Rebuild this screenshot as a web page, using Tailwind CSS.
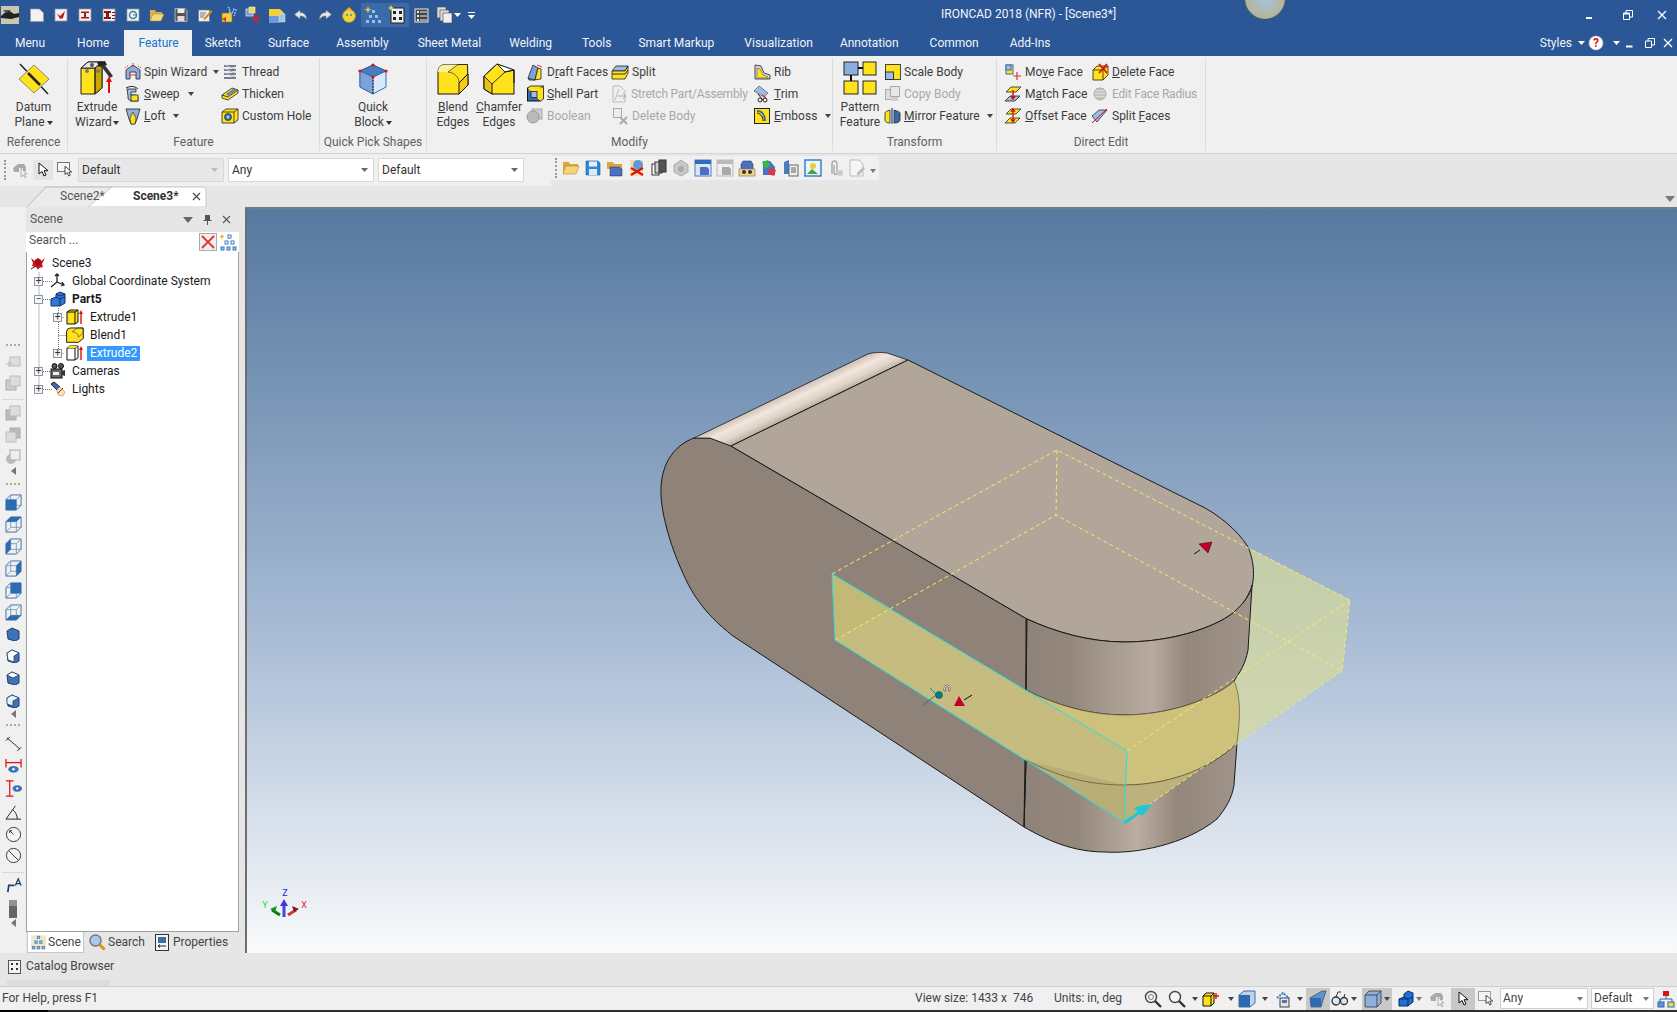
<!DOCTYPE html>
<html lang="en">
<head>
<meta charset="UTF-8">
<title>IRONCAD 2018 (NFR) - [Scene3*]</title>
<script src="https://cdn.jsdelivr.net/npm/@tailwindcss/browser@4"></script>
</head>
<body class="bg-[#e6e6e6] overflow-hidden">
<!-- shared icon parts -->
<svg class="hidden" width="0" height="0">
  <defs>
    <linearGradient id="gbl" x1="0" y1="0" x2="1" y2="1"><stop offset="0" stop-color="#e8f1fb"/><stop offset="1" stop-color="#7ea3cf"/></linearGradient>
    <linearGradient id="gband" x1="0" y1="1" x2="1" y2="0"><stop offset="0" stop-color="#5f87b8"/><stop offset="1" stop-color="#cddcec"/></linearGradient>
    <symbol id="arrow-cursor" viewBox="0 0 16 16"><path d="M4 1v11l3-2.5 2 4.5 2-1-2-4.300h4z" fill="#fff" stroke="#111" stroke-width="1"/></symbol>
    <symbol id="cubebase" viewBox="0 0 18 18"><path d="M1 6l5-5h11v11l-5 5H1z" fill="url(#gbl)" stroke="#3d6ea5"/><path d="M1 6h11v11M12 6l5-5M1 17l5-5V1M6 12h11" fill="none" stroke="#5e8cc0" stroke-width=".8"/></symbol>
    <symbol id="iso" viewBox="0 0 14 14"><path d="M1 4l5-3 7 3v8l-4 2-7-2z" fill="#3f74b4" stroke="#1d3f6c"/></symbol>
  </defs>
</svg>

<div class="w-[1677px] h-[1012px] flex flex-col overflow-hidden relative text-[12px] leading-[15px] text-[#3c3c3c] [font-family:Roboto,sans-serif]">

  <!-- title bar -->
  <div class="h-[30px] bg-[#2b5797] text-white flex items-center shrink-0 relative">
    <div class="w-[941px] flex items-center">
      <div class="w-[25px] pl-[1px]">
        <svg width="18" height="18" viewBox="0 0 18 18"><rect width="18" height="18" fill="#c8c8b0"/><path d="M0 10l7-6 6 4 5-1v4l-8 2-10-1z" fill="#222"/><path d="M2 4h8l-5 3z" fill="#555"/></svg>
      </div>
      <div class="flex items-center">
        <span class="w-[24px] flex justify-center"><svg width="16" height="16" viewBox="0 0 16 16"><path d="M1.500 2h9l4 4v8.500h-13z" fill="#f2f2f2" stroke="#999" stroke-width=".7"/></svg></span>
        <span class="w-[24px] flex justify-center"><svg width="16" height="16" viewBox="0 0 16 16"><rect x="2" y="2" width="12" height="12" fill="#f2f2f2" stroke="#999" stroke-width=".7"/><path d="M4 6l3 3 5-5-2 7-3 1z" fill="#c01818"/></svg></span>
        <span class="w-[24px] flex justify-center"><svg width="16" height="16" viewBox="0 0 16 16"><rect x="2" y="2" width="12" height="12" fill="#f2f2f2" stroke="#999" stroke-width=".7"/><path d="M4 4.500h8v1.500H9v4h3v1.500H4V10h3V6H4z" fill="#a81c1c"/></svg></span>
        <span class="w-[24px] flex justify-center"><svg width="16" height="16" viewBox="0 0 16 16"><rect x="2" y="2" width="12" height="12" fill="#f2f2f2" stroke="#999" stroke-width=".7"/><path d="M3 4h7v2H8v4h2v2H3v-2h2V6H3zM11 5h3v1h-3zM11 8h3v1h-3zM11 11h3v1h-3z" fill="#8a1414"/></svg></span>
        <span class="w-[24px] flex justify-center"><svg width="16" height="16" viewBox="0 0 16 16"><rect x="2" y="2" width="12" height="12" fill="#f2f2f2" stroke="#999" stroke-width=".7"/><circle cx="8" cy="8" r="3.500" fill="none" stroke="#2f89a6" stroke-width="1.500"/><path d="M8 8h4" stroke="#2f89a6"/></svg></span>
        <span class="w-[24px] flex justify-center"><svg width="16" height="16" viewBox="0 0 16 16"><path d="M1 3h5l1 2h6v2H4l-3 7z" fill="#d9b24a"/><path d="M4 7h11l-3 7H1z" fill="#f4d87a" stroke="#a8842a" stroke-width=".5"/></svg></span>
        <span class="w-[24px] flex justify-center"><svg width="16" height="16" viewBox="0 0 16 16"><path d="M2 1.500h10l2 2v11H2z" fill="#555" stroke="#ddd" stroke-width=".7"/><rect x="4.500" y="2" width="7" height="4" fill="#eee"/><rect x="4.500" y="9" width="7" height="5" fill="#ddd"/></svg></span>
        <span class="w-[24px] flex justify-center"><svg width="16" height="16" viewBox="0 0 16 16"><rect x="1.500" y="3" width="11" height="11.500" fill="#eee" stroke="#777" stroke-width=".7"/><path d="M3 6h6M3 8h5M3 10h4" stroke="#777"/><path d="M7 11l7-8 1.500 1.500-7 8-2 .5z" fill="#d88a1a"/></svg></span>
        <span class="w-[24px] flex justify-center"><svg width="18" height="18" viewBox="0 0 18 18"><path d="M2 7h10v9H2z" fill="#f4cf3c" stroke="#8a6a10" stroke-width=".6"/><path d="M2 13l4-2v5z" fill="#d33"/><path d="M8 1l2 2-1 3 3 1 2-4 2 1-2 6" fill="none" stroke="#9ec4ff" stroke-width="1.400" stroke-dasharray="2 1"/></svg></span>
        <span class="w-[24px] flex justify-center"><svg width="18" height="18" viewBox="0 0 18 18"><rect x="2" y="3" width="7" height="7" fill="#6d99d6" stroke="#e8f0ff" stroke-width=".7"/><rect x="5" y="1" width="6" height="6" fill="#f6d84c" stroke="#eee" stroke-width=".6"/><path d="M12 8v9M8 13h8" stroke="#d62121" stroke-width="2"/></svg></span>
        <span class="w-[24px] flex justify-center"><svg width="18" height="18" viewBox="0 0 18 18"><path d="M1 3h11l4 4v3H1z" fill="#f4cf3c"/><path d="M1 10h10v7H1z" fill="#6d99d6"/><path d="M11 8h6v8h-6z" fill="#9fc0e6" stroke="#eee" stroke-width=".5"/></svg></span>
        <span class="w-[24px] flex justify-center"><svg width="16" height="16" viewBox="0 0 16 16"><path d="M7 3L1.500 7.500 7 12V9c3 0 5 1 6.500 3.500C13.500 8 11 5.500 7 5.500z" fill="#e6e6e6" stroke="#777" stroke-width=".6"/></svg></span>
        <span class="w-[24px] flex justify-center"><svg width="16" height="16" viewBox="0 0 16 16"><path d="M9 3l5.500 4.500L9 12V9C6 9 4 10 2.500 12.500 2.500 8 5 5.500 9 5.500z" fill="#e6e6e6" stroke="#777" stroke-width=".6"/></svg></span>
        <span class="w-[24px] flex justify-center"><svg width="18" height="18" viewBox="0 0 18 18"><circle cx="9" cy="10" r="6.500" fill="#f2d23c" stroke="#a38b1c" stroke-width=".7"/><path d="M6 4l3-3 3 3z" fill="#e8b020"/><circle cx="7" cy="9" r="1" fill="#4d7cc4"/><circle cx="11" cy="9" r="1" fill="#4d7cc4"/></svg></span>
        <span class="w-[24px] h-[24px] flex items-center justify-center bg-[#3a6aa8]"><svg width="20" height="20" viewBox="0 0 20 20"><path d="M5 1l1 3 3 .500-3 1-1 3-1-3-3-1 3-.500z" fill="#f2d23c"/><rect x="9" y="5" width="3" height="3" fill="#8ec2ec"/><rect x="6" y="10" width="3" height="3" fill="#8ec2ec"/><rect x="12" y="10" width="3" height="3" fill="#8ec2ec"/><rect x="3" y="15" width="3" height="3" fill="#8ec2ec"/><rect x="9" y="15" width="3" height="3" fill="#8ec2ec"/><rect x="15" y="15" width="3" height="3" fill="#8ec2ec"/></svg></span>
        <span class="w-[24px] h-[24px] flex items-center justify-center bg-[#3a6aa8]"><svg width="20" height="20" viewBox="0 0 20 20"><rect x="4" y="3" width="13" height="15" fill="#eee" stroke="#222"/><path d="M6 6h3v3H6zM12 6h3v3h-3zM6 12h3v3H6zM12 12h3v3h-3z" fill="#222"/><path d="M4 0l1 2 2 1-2 1-1 2-1-2-2-1 2-1z" fill="#f2d23c"/></svg></span>
        <span class="w-[24px] flex justify-center"><svg width="17" height="17" viewBox="0 0 17 17"><rect x="2" y="2" width="13" height="13" fill="#444" stroke="#eee"/><path d="M4 4h2v2H4zM4 8h2v2H4zM4 12h2v2H4z" fill="#eee"/><path d="M7 5h7M7 9h7M7 13h7" stroke="#eee"/></svg></span>
        <span class="w-[24px] flex justify-center"><svg width="18" height="18" viewBox="0 0 18 18"><rect x="1" y="1" width="9" height="11" fill="#ddd" stroke="#555" stroke-width=".7"/><rect x="4" y="4" width="9" height="11" fill="#ddd" stroke="#555" stroke-width=".7"/><rect x="7" y="7" width="9" height="10" fill="#f0f0f0" stroke="#555" stroke-width=".7"/></svg></span>
        <svg class="ml-[-3px]" width="7" height="5" viewBox="0 0 7 5"><path d="M0 0h7L3.500 4z" fill="#fff"/></svg>
        <svg class="ml-[7px]" width="7" height="7" viewBox="0 0 7 7"><path d="M0 0h7v1H0zM0 3h7L3.500 7z" fill="#fff"/></svg>
      </div>
    </div>
    <span class="text-[#f0f4fa] mt-[-2px]">IRONCAD 2018 (NFR) - [Scene3*]</span>
    <div class="ml-auto flex items-center h-full">
      <span class="w-[36px] flex justify-center"><svg width="10" height="10" viewBox="0 0 10 10"><path d="M0 7h6v2H0z" fill="#fff"/></svg></span>
      <span class="w-[38px] flex justify-center"><svg width="10" height="10" viewBox="0 0 10 10"><path d="M.5 3h6v6.500h-6zM3 3V.5h6.500V7H7" fill="none" stroke="#fff"/><path d="M.5 3h6v1.500h-6z" fill="#fff"/></svg></span>
      <span class="w-[30px] flex justify-center"><svg width="10" height="10" viewBox="0 0 10 10"><path d="M1 1l8 8M9 1l-8 8" stroke="#fff" stroke-width="1.300"/></svg></span>
    </div>
    <div class="absolute left-[1245px] top-[-21px] w-[40px] h-[40px] rounded-full bg-radial from-[#a9c0e0] to-[#b9b17a] border border-[#b8ad6a]"></div>
  </div>

  <!-- ribbon tabs -->
  <div class="h-[26px] bg-[#2b5797] text-[#f0f4fa] flex items-stretch shrink-0 pl-[1px]">
    <span class="pl-[14px] pr-[16px] flex items-center">Menu</span>
    <span class="pl-[16px] pr-[15px] flex items-center">Home</span>
    <span class="pl-[14px] pr-[13px] flex items-center bg-[#f0f0f0] text-[#1874cd]">Feature</span>
    <span class="px-[13px] flex items-center">Sketch</span>
    <span class="pl-[14px] pr-[13px] flex items-center">Surface</span>
    <span class="px-[14px] flex items-center">Assembly</span>
    <span class="pl-[15px] pr-[14px] flex items-center">Sheet Metal</span>
    <span class="pl-[14px] pr-[15px] flex items-center">Welding</span>
    <span class="pl-[15px] pr-[13px] flex items-center">Tools</span>
    <span class="pl-[14px] pr-[15px] flex items-center">Smart Markup</span>
    <span class="pl-[15px] pr-[13px] flex items-center">Visualization</span>
    <span class="pl-[14px] pr-[16px] flex items-center">Annotation</span>
    <span class="pl-[15px] pr-[17px] flex items-center">Common</span>
    <span class="px-[14px] flex items-center">Add-Ins</span>
    <div class="ml-auto flex items-center pr-[4px]">
      <span>Styles</span>
      <svg class="ml-[6px]" width="7" height="5" viewBox="0 0 7 5"><path d="M0 0h7L3.500 4z" fill="#fff"/></svg>
      <svg class="ml-[3px]" width="16" height="16" viewBox="0 0 16 16"><circle cx="8" cy="8" r="7" fill="#fff" stroke="#bbb" stroke-dasharray="1 1"/><text x="8" y="12" text-anchor="middle" font-size="12" font-weight="700" fill="#e01010">?</text></svg>
      <svg class="ml-[9px]" width="7" height="5" viewBox="0 0 7 5"><path d="M0 0h7L3.500 4z" fill="#fff"/></svg>
      <svg class="ml-[5px]" width="9" height="9" viewBox="0 0 9 9"><path d="M1 6.500h6.500v2H1z" fill="#fff"/></svg>
      <svg class="ml-[11px]" width="10" height="10" viewBox="0 0 10 10"><path d="M.5 3h6v6.500h-6zM3 3V.5h6.500V7H7" fill="none" stroke="#fff"/></svg>
      <svg class="ml-[8px]" width="10" height="10" viewBox="0 0 10 10"><path d="M1 1l8 8M9 1l-8 8" stroke="#fff" stroke-width="1.300"/></svg>
    </div>
  </div>

  <!-- ribbon -->
  <div class="h-[98px] bg-[#f0f0f0] flex shrink-0 border-b border-[#d4d4d4]">

    <!-- Reference -->
    <div class="w-[68px] border-r border-[#dcdcdc] flex flex-col shrink-0 my-[2px]">
      <div class="h-[74px] flex flex-col items-center pt-[5px]">
        <svg width="34" height="32" viewBox="0 0 34 32"><path d="M3 1l28 30" stroke="#222" stroke-width="1.500"/><path d="M17 2l15 14-15 14L2 16z" fill="#ffe21c" stroke="#8a8a70"/><path d="M11 10l12 12" stroke="#222" stroke-width="2.500"/></svg>
        <span class="mt-[5px]">Datum</span>
        <span class="flex items-center gap-[2px]">Plane <svg width="6" height="4" viewBox="0 0 6 4"><path d="M0 0h6L3 4z" fill="#333"/></svg></span>
      </div>
      <span class="text-center text-[#606060] mt-[3px]">Reference</span>
    </div>

    <!-- Feature -->
    <div class="w-[252px] border-r border-[#dcdcdc] flex flex-col shrink-0 my-[2px]">
      <div class="h-[74px] flex pl-[5px] pt-[3px]">
        <div class="w-[48px] flex flex-col items-center">
          <svg width="36" height="34" viewBox="0 0 36 34"><path d="M2 7l7-6h14v26l-7 6H2z" fill="#ffe21c" stroke="#222"/><path d="M16 7l7-6v26l-7 6z" fill="#c9a900" stroke="#222"/><path d="M2 7h14v26" fill="none" stroke="#222"/><path d="M2 7l7-6h14l-7 6z" fill="#e8e8e8" stroke="#222"/><circle cx="8" cy="10" r="2" fill="#777"/><circle cx="13" cy="4" r="2" fill="#555"/><circle cx="19" cy="10" r="2" fill="#777"/><path d="M18 1l8-1 2 4-8 2z" fill="#222"/><path d="M22 5l3-2 9 12-3 2z" fill="#333"/><path d="M30 17v15" stroke="#e01010" stroke-width="2"/><path d="M27 21l3-6 3 6z" fill="#e01010"/></svg>
          <span class="mt-[5px]">Extrude</span>
          <span class="flex items-center gap-[1px]">Wizard<svg width="6" height="4" viewBox="0 0 6 4"><path d="M0 0h6L3 4z" fill="#333"/></svg></span>
        </div>
        <div class="ml-[3px] w-[97px] flex flex-col">
          <div class="flex items-center h-[22px] gap-[2px]"><svg width="18" height="18" viewBox="0 0 18 18"><path d="M2 16V7l7-5 7 5v9h-4V9H6v7z" fill="#8fb0dd" stroke="#222" stroke-width=".8"/><path d="M1 5l4-3M17 5l-4-3M9 0v4" stroke="#d33" stroke-dasharray="1.500 1"/><path d="M6 12h6" stroke="#d33"/></svg><span>Spin Wizard</span><svg class="ml-[4px]" width="6" height="4" viewBox="0 0 6 4"><path d="M0 0h6L3 4z" fill="#444"/></svg></div>
          <div class="flex items-center h-[22px] gap-[2px]"><svg width="18" height="18" viewBox="0 0 18 18"><path d="M3 4h9v3H7v3h4l3 2v4H7l-3-2v-3z" fill="#9dbbe4" stroke="#222" stroke-width=".8"/><rect x="7" y="10" width="7" height="6" fill="#ffe21c" stroke="#222" stroke-width=".8"/><path d="M2 3c6-3 10-1 12 1" fill="none" stroke="#222"/></svg><span><u>S</u>weep</span><svg class="ml-[6px]" width="6" height="4" viewBox="0 0 6 4"><path d="M0 0h6L3 4z" fill="#444"/></svg></div>
          <div class="flex items-center h-[22px] gap-[2px]"><svg width="18" height="18" viewBox="0 0 18 18"><path d="M2 2h14l-3 10-2 5H7L5 12z" fill="#8fb0dd" stroke="#222" stroke-width=".8"/><path d="M6 11l3-6 3 6-1 6H7z" fill="#ffe21c" stroke="#222" stroke-width=".6"/></svg><span><u>L</u>oft</span><svg class="ml-[6px]" width="6" height="4" viewBox="0 0 6 4"><path d="M0 0h6L3 4z" fill="#444"/></svg></div>
        </div>
        <div class="flex flex-col">
          <div class="flex items-center h-[22px] gap-[3px]"><svg width="18" height="18" viewBox="0 0 18 18"><path d="M3 3h12M3 7h12M3 11h12M3 15h12" stroke="#555" stroke-width="1.500"/><path d="M4 2l10 4M4 6l10 4M4 10l10 4" stroke="#9dbbe4"/></svg><span>Thread</span></div>
          <div class="flex items-center h-[22px] gap-[3px]"><svg width="18" height="18" viewBox="0 0 18 18"><path d="M1 10l10-7 6 2v3L7 15l-6-2z" fill="#ffe21c" stroke="#222" stroke-width=".8"/><path d="M1 10l6 2 10-7" fill="none" stroke="#222" stroke-width=".8"/><path d="M5 9l7-5 4 1-9 6z" fill="#5d87b8"/></svg><span>Thicken</span></div>
          <div class="flex items-center h-[22px] gap-[3px]"><svg width="18" height="18" viewBox="0 0 18 18"><path d="M1 5l4-3h12v11l-4 3H1z" fill="#ffe21c" stroke="#222" stroke-width=".8"/><path d="M13 5v11M1 5h12l4-3" fill="none" stroke="#222" stroke-width=".8"/><circle cx="7" cy="10" r="3.500" fill="#3b6cb4" stroke="#222" stroke-width=".7"/><circle cx="7" cy="10" r="1.500" fill="#bcd"/></svg><span>Custom Hole</span></div>
        </div>
      </div>
      <span class="text-center text-[#606060] mt-[3px]">Feature</span>
    </div>

    <!-- Quick Pick Shapes -->
    <div class="w-[107px] border-r border-[#dcdcdc] flex flex-col shrink-0 my-[2px]">
      <div class="h-[74px] flex flex-col items-center pt-[5px]">
        <svg width="32" height="34" viewBox="0 0 32 34"><path d="M16 2l13 6v16l-13 7-13-7V8z" fill="#dbe8f8" stroke="#3a6bab"/><path d="M16 2l13 6-13 6L3 8z" fill="#4a7cc2" stroke="#2d5a96"/><path d="M3 8l13 6v17L3 24z" fill="#7ba3d8" stroke="#3a6bab"/><path d="M16 14v17" stroke="#111" stroke-dasharray="1.500 1.500"/><circle cx="16" cy="2" r="1.600" fill="#e01010"/><circle cx="3" cy="8" r="1.600" fill="#e01010"/><circle cx="29" cy="8" r="1.600" fill="#e01010"/><circle cx="16" cy="14" r="1.600" fill="#e01010"/></svg>
        <span class="mt-[3px]">Quick</span>
        <span class="flex items-center gap-[2px]">Block<svg width="6" height="4" viewBox="0 0 6 4"><path d="M0 0h6L3 4z" fill="#333"/></svg></span>
      </div>
      <span class="text-center text-[#606060] mt-[3px]">Quick Pick Shapes</span>
    </div>

    <!-- Modify -->
    <div class="w-[406px] border-r border-[#dcdcdc] flex flex-col shrink-0 my-[2px]">
      <div class="h-[74px] flex pl-[3px] pt-[5px]">
        <div class="w-[46px] flex flex-col items-center">
          <svg width="32" height="32" viewBox="0 0 32 32"><path d="M1 31V9Q1 2 8 1.500H30.500L31 22 22 31z" fill="#ffe21c" stroke="#111"/><path d="M1 9Q1 2 8 1.500H21L11 9z" fill="#f8f0a0"/><path d="M11 9L21 1.500H30.500V11L22 20C22 14 18 10 11 9z" fill="url(#gband)" stroke="#333" stroke-width=".7"/><path d="M22 31V20L31 11V22z" fill="#f2cd14" stroke="#111"/></svg>
          <span class="mt-[5px]"><u>B</u>lend</span>
          <span>Edges</span>
        </div>
        <div class="w-[46px] flex flex-col items-center">
          <svg width="32" height="32" viewBox="0 0 32 32"><path d="M1 13L14 1l17 6v24H9L1 26z" fill="#ffe21c" stroke="#111"/><path d="M1 13v13l8 5V21z" fill="#e8c410" stroke="#111"/><path d="M1 13L14 1l8 8L9 21z" fill="url(#gband)" stroke="#333"/><path d="M14 1l17 6-9 2z" fill="#fff" stroke="#111" stroke-width=".8"/><path d="M22 9l9-2v13" fill="none" stroke="#111"/></svg>
          <span class="mt-[5px]"><u>C</u>hamfer</span>
          <span>Edges</span>
        </div>
        <div class="ml-[4px] w-[85px] flex flex-col mt-[-2px]">
          <div class="flex items-center h-[22px] gap-[3px]"><svg width="18" height="18" viewBox="0 0 18 18"><path d="M2 15l5-13 5 3-3 12H3z" fill="#7ba3d8" stroke="#222" stroke-width=".8"/><path d="M2 15l6 2 7-1V6l-3-1-3 12" fill="#ffe21c" stroke="#222" stroke-width=".8"/><path d="M11 2l5 2" stroke="#d33"/></svg><span>D<u>r</u>aft Faces</span></div>
          <div class="flex items-center h-[22px] gap-[3px]"><svg width="18" height="18" viewBox="0 0 18 18"><rect x="1.500" y="3" width="13" height="13" fill="#3a6bab" stroke="#111"/><path d="M1.500 3l3-2h13v13l-3 2M14.500 3l3-2" fill="#ffe21c" stroke="#111" stroke-width=".8"/><rect x="5" y="6.500" width="6" height="6" fill="#9dbbe4" stroke="#111" stroke-width=".7"/></svg><span><u>S</u>hell Part</span></div>
          <div class="flex items-center h-[22px] gap-[3px] text-[#a8a8a8]"><svg width="18" height="18" viewBox="0 0 18 18"><rect x="6" y="2" width="10" height="10" fill="#ccc" stroke="#aaa"/><circle cx="7" cy="10" r="6" fill="#bbb" stroke="#999"/></svg><span>Boolean</span></div>
        </div>
        <div class="w-[142px] flex flex-col mt-[-2px]">
          <div class="flex items-center h-[22px] gap-[3px]"><svg width="18" height="18" viewBox="0 0 18 18"><path d="M1 8l4-5h12l-3 5H1z" fill="#9dbbe4" stroke="#222" stroke-width=".8"/><path d="M1 8h13l3-5v7l-3 6H1z" fill="#ffe21c" stroke="#222" stroke-width=".8"/><path d="M1 11h13l3-4" fill="none" stroke="#333"/></svg><span>Split</span></div>
          <div class="flex items-center h-[22px] gap-[2px] text-[#a8a8a8]"><svg width="18" height="18" viewBox="0 0 18 18"><path d="M2 1h7l5 5v11H2z" fill="#eee" stroke="#bbb"/><path d="M7 11h8M12 8l3 3-3 3" fill="none" stroke="#aaa"/><path d="M4 15L8 4" stroke="#bbb"/></svg><span class="tracking-[-0.2px]">Stretch Part/Assembly</span></div>
          <div class="flex items-center h-[22px] gap-[3px] text-[#a8a8a8]"><svg width="18" height="18" viewBox="0 0 18 18"><rect x="2.500" y="1.500" width="8" height="9" fill="#eee" stroke="#aaa"/><path d="M9 10l7 7M16 10l-7 7" stroke="#aaa" stroke-width="2"/></svg><span>Delete Body</span></div>
        </div>
        <div class="flex flex-col mt-[-2px]">
          <div class="flex items-center h-[22px] gap-[3px]"><svg width="18" height="18" viewBox="0 0 18 18"><path d="M2 16V2l6 1 3 7 6 2v4z" fill="#d8d8d8" stroke="#222" stroke-width=".8"/><path d="M4 15V5l3 1 3 6 5 2v1z" fill="#ffe21c" stroke="#555" stroke-width=".6"/></svg><span>Rib</span></div>
          <div class="flex items-center h-[22px] gap-[3px]"><svg width="18" height="18" viewBox="0 0 18 18"><path d="M1 6l5-5 9 7-4 4z" fill="#9dbbe4" stroke="#555" stroke-width=".7"/><path d="M9 10l4 3" stroke="#d33" stroke-width="1.500"/><circle cx="7" cy="15" r="2" fill="none" stroke="#222"/><circle cx="12" cy="15" r="2" fill="none" stroke="#222"/><path d="M5 9l5 6" stroke="#222"/></svg><span><u>T</u>rim</span></div>
          <div class="flex items-center h-[22px] gap-[3px]"><svg width="18" height="18" viewBox="0 0 18 18"><rect x="1.500" y="1.500" width="15" height="15" fill="#ffe21c" stroke="#222"/><path d="M4 4c5 0 8 4 8 10" fill="none" stroke="#3a6bab" stroke-width="2"/><path d="M4 6c4 1 6 4 6 8" fill="none" stroke="#111"/></svg><span><u>E</u>mboss</span><svg class="ml-[5px]" width="6" height="4" viewBox="0 0 6 4"><path d="M0 0h6L3 4z" fill="#444"/></svg></div>
        </div>
      </div>
      <span class="text-center text-[#606060] mt-[3px]">Modify</span>
    </div>

    <!-- Transform -->
    <div class="w-[164px] border-r border-[#dcdcdc] flex flex-col shrink-0 my-[2px]">
      <div class="h-[74px] flex pl-[3px] pt-[3px]">
        <div class="w-[48px] flex flex-col items-center">
          <svg width="34" height="34" viewBox="0 0 34 34"><rect x="1" y="1" width="14" height="13" fill="#8caedf" stroke="#222"/><rect x="20" y="1" width="13" height="13" fill="#ffe21c" stroke="#222"/><rect x="1" y="20" width="14" height="13" fill="#ffe21c" stroke="#222"/><rect x="20" y="20" width="13" height="13" fill="#ffe21c" stroke="#222"/><path d="M8 14v6M15 7h5" stroke="#111" stroke-width="2"/></svg>
          <span class="mt-[5px]">Pattern</span>
          <span>Feature</span>
        </div>
        <div class="flex flex-col">
          <div class="flex items-center h-[22px] gap-[2px]"><svg width="18" height="18" viewBox="0 0 18 18"><rect x="1.500" y="1.500" width="15" height="15" fill="#ffe21c" stroke="#444"/><rect x="1.500" y="9" width="8" height="7.500" fill="#9dbbe4" stroke="#333"/></svg><span>Scale Body</span></div>
          <div class="flex items-center h-[22px] gap-[2px] text-[#a8a8a8]"><svg width="18" height="18" viewBox="0 0 18 18"><rect x="1.500" y="4.500" width="9" height="10" fill="#ddd" stroke="#aaa"/><rect x="6.500" y="1.500" width="9" height="10" fill="#e8e8e8" stroke="#aaa"/><rect x="8" y="12" width="6" height="4" fill="#ccc"/></svg><span>Copy Body</span></div>
          <div class="flex items-center h-[22px] gap-[2px]"><svg width="18" height="18" viewBox="0 0 18 18"><path d="M8 1v16" stroke="#3a6bab" stroke-width="1.500"/><path d="M6 3c-3 1-5 2-5 3v7c0 2 2 3 5 3z" fill="#ffe21c" stroke="#222" stroke-width=".8"/><path d="M10 3c3 1 6 2 6 3v7c0 2-3 3-6 3z" fill="#3a6bab" stroke="#222" stroke-width=".8"/></svg><span><u>M</u>irror Feature</span><svg class="ml-[5px]" width="6" height="4" viewBox="0 0 6 4"><path d="M0 0h6L3 4z" fill="#444"/></svg></div>
        </div>
      </div>
      <span class="text-center text-[#606060] mt-[3px]">Transform</span>
    </div>

    <!-- Direct Edit -->
    <div class="w-[209px] border-r border-[#dcdcdc] flex flex-col shrink-0 my-[2px]">
      <div class="h-[74px] flex pl-[7px] pt-[3px]">
        <div class="w-[87px] flex flex-col">
          <div class="flex items-center h-[22px] gap-[3px]"><svg width="18" height="18" viewBox="0 0 18 18"><rect x="2" y="2" width="7" height="9" fill="#ffe21c" stroke="#3a6bab"/><rect x="2" y="2" width="5" height="5" fill="#9dbbe4" stroke="#3a6bab"/><path d="M13 9v8M9 13h8" stroke="#d33" stroke-width="1.200"/></svg><span>Mo<u>v</u>e Face</span></div>
          <div class="flex items-center h-[22px] gap-[3px]"><svg width="18" height="18" viewBox="0 0 18 18"><path d="M2 7l5-5h10l-5 5z" fill="#ffe21c" stroke="#222" stroke-width=".8"/><path d="M1 16l5-5h10l-5 5z" fill="#9dbbe4" stroke="#222" stroke-width=".8"/><path d="M9 5v8M7 11l2 3 2-3" fill="none" stroke="#d01010" stroke-width="1.400"/></svg><span>M<u>a</u>tch Face</span></div>
          <div class="flex items-center h-[22px] gap-[3px]"><svg width="18" height="18" viewBox="0 0 18 18"><path d="M2 7l5-5h10l-5 5z" fill="#ffe21c" stroke="#222" stroke-width=".8"/><path d="M1 16l5-5h10l-5 5z" fill="#ffe21c" stroke="#222" stroke-width=".8"/><path d="M9 3v11M7 5l2-3 2 3M7 12l2 3 2-3" fill="none" stroke="#d01010" stroke-width="1.300"/></svg><span><u>O</u>ffset Face</span></div>
        </div>
        <div class="flex flex-col">
          <div class="flex items-center h-[22px] gap-[3px]"><svg width="18" height="18" viewBox="0 0 18 18"><path d="M2 7l4-4h11v9l-5 5H2z" fill="#ffe21c" stroke="#222" stroke-width=".8"/><path d="M2 7h10v10M12 7l5-4" fill="none" stroke="#222" stroke-width=".8"/><path d="M8 1l8 9M16 1L8 10" stroke="#e01010" stroke-width="1.800"/></svg><span><u>D</u>elete Face</span></div>
          <div class="flex items-center h-[22px] gap-[3px] text-[#a8a8a8]"><svg width="18" height="18" viewBox="0 0 18 18"><circle cx="9" cy="9" r="6" fill="#ddd" stroke="#aaa"/><path d="M5 4h8M4 7h10M4 10h10M5 13h8" stroke="#aaa"/></svg><span class="tracking-[-0.2px]">Edit Face Radius</span></div>
          <div class="flex items-center h-[22px] gap-[3px]"><svg width="18" height="18" viewBox="0 0 18 18"><path d="M1 9l7-6h8l-5 6-5 6z" fill="#9dbbe4" stroke="#333" stroke-width=".8"/><path d="M1 16L16 2" stroke="#d01010"/></svg><span>Split <u>F</u>aces</span></div>
        </div>
      </div>
      <span class="text-center text-[#606060] mt-[3px]">Direct Edit</span>
    </div>
  </div>

  <!-- toolbar row -->
  <div class="h-[32px] bg-[#e6e6e6] flex items-start shrink-0">
    <div class="w-[551px] h-full bg-[#f0f0f0] flex items-start pt-[4px] pl-[4px]">
      <span class="w-[2px] h-[20px] mt-[2px] border-l-2 border-dotted border-[#999]"></span>
      <span class="ml-[5px] w-[20px] mt-[3px] flex justify-center"><svg width="18" height="18" viewBox="0 0 18 18"><path d="M1 7l5-4h6l2 3v4h-3v-3l-4 0v4H2z" fill="#aaa"/><path d="M9 7v9l2-2 2 3 1-1-2-3h3z" fill="#eee" stroke="#999" stroke-width=".7"/></svg></span>
      <span class="ml-[2px] w-[20px] h-[20px] mt-[2px] bg-[#e4e4e4] flex items-center justify-center"><svg width="16" height="16"><use href="#arrow-cursor"/></svg></span>
      <span class="ml-[2px] w-[20px] mt-[3px] flex justify-center"><svg width="18" height="18" viewBox="0 0 18 18"><rect x="1.500" y="1.500" width="12" height="9" fill="#f4f4f4" stroke="#777"/><use href="#arrow-cursor" x="6" y="4" width="12" height="13"/></svg></span>
      <div class="ml-[3px] w-[146px] h-[24px] bg-[#e8e8e8] border border-[#d8d8d8] flex items-center px-[3px] text-[#333]">Default<svg class="ml-auto mr-[2px]" width="7" height="4" viewBox="0 0 7 4"><path d="M0 0h7L3.500 4z" fill="#bbb"/></svg></div>
      <div class="ml-[4px] w-[146px] h-[24px] bg-white border border-[#d8d8d8] flex items-center px-[3px] text-[#333]">Any<svg class="ml-auto mr-[2px]" width="7" height="4" viewBox="0 0 7 4"><path d="M0 0h7L3.500 4z" fill="#666"/></svg></div>
      <div class="ml-[4px] w-[146px] h-[24px] bg-white border border-[#d8d8d8] flex items-center px-[3px] text-[#333]">Default<svg class="ml-auto mr-[2px]" width="7" height="4" viewBox="0 0 7 4"><path d="M0 0h7L3.500 4z" fill="#666"/></svg></div>
    </div>
    <div class="w-[328px] h-[24px] mt-[2px] bg-[#f0f0f0] flex items-center pl-[4px]">
      <span class="w-[2px] h-[20px] border-l-2 border-dotted border-[#999]"></span>
      <div class="flex items-center ml-[5px] gap-[4px]">
        <svg width="18" height="18" viewBox="0 0 18 18"><path d="M1 3h6l1 2h8v2H4L1 15z" fill="#d9a640"/><path d="M4 7h13l-3 8H1z" fill="#f4d478" stroke="#b58a2a" stroke-width=".6"/></svg>
        <svg width="18" height="18" viewBox="0 0 18 18"><path d="M2 2h12l2 2v12H2z" fill="#2f8ad8" stroke="#1a5c9c" stroke-width=".6"/><rect x="5" y="2.500" width="8" height="5" fill="#eef"/><rect x="5" y="10" width="8" height="6" fill="#dfe9f5"/></svg>
        <svg width="18" height="18" viewBox="0 0 18 18"><path d="M1 3h6l1 2h8v5H1z" fill="#d9a640"/><path d="M4 8h9l3 2v7H4z" fill="#4a6fc4" stroke="#234" stroke-width=".5"/></svg>
        <svg width="18" height="18" viewBox="0 0 18 18"><rect x="2" y="1" width="13" height="16" fill="#f6ddb0"/><circle cx="10" cy="6" r="5" fill="#5d9ad8"/><path d="M3 9l12 7M15 9L3 16" stroke="#e01010" stroke-width="2.200"/></svg>
        <svg width="18" height="18" viewBox="0 0 18 18"><rect x="2" y="5" width="7" height="11" fill="#fff" stroke="#333"/><rect x="5" y="3" width="7" height="11" fill="#ccc" stroke="#333"/><rect x="9" y="1" width="7" height="12" fill="#555" stroke="#333"/></svg>
        <svg width="18" height="18" viewBox="0 0 18 18"><path d="M9 1l7 5v7l-7 4-7-4V6z" fill="#c8c8c8" stroke="#aaa"/><circle cx="9" cy="10" r="3" fill="#aaa"/></svg>
        <svg width="18" height="18" viewBox="0 0 18 18"><rect x="1" y="1" width="16" height="16" fill="#dbe7f5" stroke="#4a7cc2"/><rect x="1" y="1" width="16" height="4" fill="#2f6cc0"/><path d="M6 8h7l2 2v6H6z" fill="#4a6fc4"/></svg>
        <svg width="18" height="18" viewBox="0 0 18 18"><rect x="1" y="1" width="16" height="16" fill="#eee" stroke="#bbb"/><rect x="1" y="1" width="16" height="4" fill="#bbb"/><path d="M6 8h7l2 2v6H6z" fill="#aaa"/></svg>
        <svg width="18" height="18" viewBox="0 0 18 18"><path d="M5 2h8l2 3v6H3V5z" fill="#4a6fc4" stroke="#234" stroke-width=".5"/><rect x="1" y="10" width="16" height="7" fill="#efd68c" stroke="#865" stroke-width=".6"/><circle cx="6" cy="13" r="2" fill="#333"/><circle cx="12" cy="13" r="2" fill="#333"/></svg>
        <svg width="18" height="18" viewBox="0 0 18 18"><path d="M3 2h7l5 6v8H3z" fill="#4a6fc4"/><path d="M2 3l6-2 2 6-5 3z" fill="#3cb44a"/><path d="M10 9l6 2-2 6-6-2z" fill="#e03a3a"/></svg>
        <svg width="18" height="18" viewBox="0 0 18 18"><path d="M2 3l5-2v14H2z" fill="#4a7cc2"/><rect x="7" y="6" width="9" height="11" fill="#eee" stroke="#666"/><path d="M9 9h5M9 11h5M9 13h5" stroke="#666"/></svg>
        <svg width="18" height="18" viewBox="0 0 18 18"><rect x="1" y="1" width="16" height="16" fill="#eaf4ff" stroke="#2f7ac4" stroke-width="1.400"/><circle cx="9" cy="7" r="3" fill="#e8cf3c"/><path d="M3 15l5-5 6 5z" fill="#4ba03c"/></svg>
        <svg width="18" height="18" viewBox="0 0 18 18"><path d="M6 15V5c0-4 5-4 5 0v9c0 2-3 2-3 0V6" fill="none" stroke="#aaa" stroke-width="1.400"/><circle cx="14" cy="14" r="3" fill="#ccc"/></svg>
        <svg width="18" height="18" viewBox="0 0 18 18"><path d="M2 1h9l4 4v12H2z" fill="#f6f6f6" stroke="#bbb"/><path d="M9 14l6-6 2 2-6 6h-2z" fill="#bbb"/></svg>
        <svg class="mt-[6px]" width="6" height="4" viewBox="0 0 6 4"><path d="M0 0h6L3 4z" fill="#777"/></svg>
      </div>
    </div>
  </div>

  <!-- document tabs -->
  <div class="h-[21px] flex items-end shrink-0 relative">
    <div class="relative w-[210px] h-[21px] ml-[26px]">
      <svg class="absolute left-0 top-0" width="190" height="21" viewBox="0 0 190 21"><path d="M1 21L20 1h68l-18 20" fill="#ebebeb" stroke="#b8b8b8"/><path d="M62 21L86 1h91c2 0 3 1 3 3v17z" fill="#fff" stroke="#c8c8c8"/></svg>
      <div class="relative flex items-center h-full">
        <span class="ml-[34px] w-[66px] text-[#555]">Scene2*</span>
        <span class="ml-[7px] font-bold text-[#333] w-[59px]">Scene3*</span>
        <svg width="9" height="9" viewBox="0 0 9 9"><path d="M1 1l7 7M8 1L1 8" stroke="#444" stroke-width="1.100"/></svg>
      </div>
    </div>
    <svg class="ml-auto mr-[2px] mb-[5px]" width="10" height="6" viewBox="0 0 10 6"><path d="M0 0h10L5 6z" fill="#777"/></svg>
  </div>

  <!-- main -->
  <div class="h-[746px] flex shrink-0">
    <!-- left vertical toolbar -->
    <div class="w-[26px] bg-[#f0f0f0] shrink-0 flex flex-col items-center pt-[137px]">
      <span class="w-[14px] border-t-2 border-dotted border-[#aaa]"></span>
      <svg class="mt-[8px]" width="16" height="16" viewBox="0 0 16 16"><rect x="5" y="3" width="10" height="9" fill="#ddd" stroke="#bbb"/><path d="M1 10h6M4 7v6" stroke="#bbb"/></svg>
      <svg class="mt-[5px]" width="16" height="16" viewBox="0 0 16 16"><rect x="1" y="5" width="10" height="10" fill="#ccc" stroke="#aaa"/><rect x="5" y="1" width="10" height="10" fill="#ddd" stroke="#bbb"/></svg>
      <span class="w-[22px] border-t border-[#d8d8d8] mt-[8px]"></span>
      <svg class="mt-[5px]" width="16" height="16" viewBox="0 0 16 16"><rect x="1" y="5" width="10" height="10" fill="#bbb" stroke="#aaa"/><rect x="5" y="1" width="10" height="10" fill="#ddd" stroke="#bbb"/></svg>
      <svg class="mt-[6px]" width="16" height="16" viewBox="0 0 16 16"><rect x="5" y="1" width="10" height="10" fill="#bbb" stroke="#aaa"/><rect x="1" y="5" width="10" height="10" fill="#ddd" stroke="#bbb"/></svg>
      <svg class="mt-[6px]" width="16" height="16" viewBox="0 0 16 16"><circle cx="6" cy="10" r="5" fill="#bbb"/><rect x="5" y="1" width="10" height="10" fill="#eee" stroke="#aaa"/></svg>
      <svg class="mt-[2px]" width="5" height="8" viewBox="0 0 5 8"><path d="M5 0v8L0 4z" fill="#777"/></svg>
      <span class="w-[14px] border-t-2 border-dotted border-[#aaa] mt-[8px]"></span>
      <svg class="mt-[9px]" width="17" height="17" viewBox="0 0 18 18"><use href="#cubebase" width="18" height="18"/><rect x="1" y="6" width="11" height="11" fill="#2d6ab0"/></svg>
      <svg class="mt-[5px]" width="17" height="17" viewBox="0 0 18 18"><use href="#cubebase" width="18" height="18"/><path d="M1 6l5-5h11l-5 5z" fill="#2d6ab0"/></svg>
      <svg class="mt-[5px]" width="17" height="17" viewBox="0 0 18 18"><use href="#cubebase" width="18" height="18"/><path d="M1 6l5-5v11l-5 5z" fill="#2d6ab0"/></svg>
      <svg class="mt-[5px]" width="17" height="17" viewBox="0 0 18 18"><use href="#cubebase" width="18" height="18"/><path d="M12 6l5-5v11l-5 5z" fill="#2d6ab0"/></svg>
      <svg class="mt-[5px]" width="17" height="17" viewBox="0 0 18 18"><use href="#cubebase" width="18" height="18"/><rect x="6" y="1" width="11" height="11" fill="#2d6ab0"/></svg>
      <svg class="mt-[5px]" width="17" height="17" viewBox="0 0 18 18"><use href="#cubebase" width="18" height="18"/><path d="M1 17l5-5h11l-5 5z" fill="#2d6ab0"/></svg>
      <svg class="mt-[6px]" width="14" height="14" viewBox="0 0 14 14"><use href="#iso" width="14" height="14"/></svg>
      <svg class="mt-[8px]" width="14" height="14" viewBox="0 0 14 14"><use href="#iso" width="14" height="14"/><path d="M1 4l5-3 7 3-5 3v6l-6-2z" fill="#fff" stroke="#1d3f6c" stroke-width=".8"/></svg>
      <svg class="mt-[8px]" width="14" height="14" viewBox="0 0 14 14"><use href="#iso" width="14" height="14"/><path d="M1 4l5-3 7 3-6 3z" fill="#fff" stroke="#1d3f6c" stroke-width=".8"/></svg>
      <svg class="mt-[9px]" width="14" height="14" viewBox="0 0 14 14"><use href="#iso" width="14" height="14"/><path d="M1 4l5-3 7 3-6 3v5l-6-2z" fill="#e8f0fa" stroke="#1d3f6c" stroke-width=".8"/></svg>
      <svg class="mt-[2px]" width="5" height="8" viewBox="0 0 5 8"><path d="M5 0v8L0 4z" fill="#777"/></svg>
      <span class="w-[14px] border-t-2 border-dotted border-[#aaa] mt-[6px]"></span>
      <svg class="mt-[9px]" width="17" height="17" viewBox="0 0 18 18"><path d="M2 3l14 12M1 6l4-4M13 17l4-4" stroke="#222"/></svg>
      <svg class="mt-[6px]" width="17" height="17" viewBox="0 0 18 18"><path d="M1 1v9M17 1v9M1 5h16" stroke="#e01010" stroke-width="1.300"/><ellipse cx="9" cy="12" rx="5" ry="3" fill="#2f7ad4" stroke="#222" stroke-width=".5"/><circle cx="9" cy="12" r="1.300" fill="#fff"/></svg>
      <svg class="mt-[5px]" width="17" height="17" viewBox="0 0 18 18"><path d="M1 1h8M1 17h8M5 1v16" stroke="#e01010" stroke-width="1.300"/><ellipse cx="13" cy="9" rx="4.500" ry="3" fill="#2f7ad4" stroke="#222" stroke-width=".5"/><circle cx="13" cy="9" r="1.200" fill="#fff"/></svg>
      <svg class="mt-[7px]" width="17" height="17" viewBox="0 0 18 18"><path d="M1 16h16M1 16L11 2" stroke="#222" fill="none"/><path d="M8 6c3 2 5 6 5 10" fill="none" stroke="#222"/></svg>
      <svg class="mt-[5px]" width="17" height="17" viewBox="0 0 18 18"><circle cx="9" cy="9" r="7.500" fill="#f4f4f4" stroke="#333"/><path d="M9 9L5 5M5 5h2.500M5 5v2.500" stroke="#333" fill="none"/></svg>
      <svg class="mt-[4px]" width="17" height="17" viewBox="0 0 18 18"><circle cx="9" cy="9" r="7.500" fill="#f4f4f4" stroke="#333"/><path d="M4 4l10 10" stroke="#333"/></svg>
      <span class="w-[22px] border-t border-[#d8d8d8] mt-[8px]"></span>
      <svg class="mt-[3px]" width="17" height="17" viewBox="0 0 18 18"><path d="M3 17l1-7h6" fill="none" stroke="#1d3f6c" stroke-width="1.800"/><path d="M11 10l3-7 3 7M12 8h4" fill="none" stroke="#1d3f6c" stroke-width="1.400"/></svg>
      <svg class="mt-[7px]" width="10" height="18" viewBox="0 0 10 18"><path d="M1 1h8M1 3h8M1 5h8" stroke="#333"/><rect x="1" y="6" width="8" height="12" fill="#666"/></svg>
      <svg class="mt-[1px]" width="5" height="8" viewBox="0 0 5 8"><path d="M5 0v8L0 4z" fill="#777"/></svg>
    </div>

    <!-- scene panel -->
    <div class="w-[219px] shrink-0 flex flex-col pr-[6px] bg-[#e6e6e6]">
      <div class="h-[25px] flex items-center pl-[4px] text-[#555]">
        <span>Scene</span>
        <svg class="ml-auto" width="10" height="6" viewBox="0 0 10 6"><path d="M0 0h10L5 6z" fill="#666"/></svg>
        <svg class="ml-[10px]" width="9" height="11" viewBox="0 0 9 11"><path d="M2 1h5v5h1.500v1H5v4H4V7H.5V6H2z" fill="#555"/></svg>
        <svg class="ml-[10px] mr-[8px]" width="9" height="9" viewBox="0 0 9 9"><path d="M1 1l7 7M8 1L1 8" stroke="#555" stroke-width="1.100"/></svg>
      </div>
      <div class="h-[20px] bg-white flex items-center pl-[3px] pr-[2px] text-[#555]">
        <span class="mt-[-3px]">Search ...</span>
        <span class="ml-auto w-[18px] h-[18px] bg-[#eee] border border-[#aaa] flex items-center justify-center"><svg width="14" height="14" viewBox="0 0 14 14"><path d="M1 1l12 12M13 1L1 13" stroke="#e0362c" stroke-width="1.800"/></svg></span>
        <svg class="ml-[1px]" width="19" height="18" viewBox="0 0 19 18"><path d="M4 1l1 2 2 .500-2 .500-1 2-1-2-2-.500 2-.500z" fill="#f0a810"/><rect x="10" y="2" width="3" height="3" fill="none" stroke="#3b7cc4"/><rect x="7" y="8" width="3" height="3" fill="none" stroke="#3b7cc4"/><rect x="13" y="8" width="3" height="3" fill="none" stroke="#3b7cc4"/><rect x="3" y="14" width="3" height="3" fill="#9ac2ea" stroke="#3b7cc4"/><rect x="9" y="14" width="3" height="3" fill="#9ac2ea" stroke="#3b7cc4"/><rect x="15" y="14" width="3" height="3" fill="#9ac2ea" stroke="#3b7cc4"/></svg>
      </div>
      <div class="flex-1 bg-white border-x border-b border-[#a0a0a0] pt-[2px] relative text-[#1a1a1a]">
        <svg class="absolute left-0 top-0" width="70" height="145"><path d="M12 20.500v116M12 29.500h14M12 47.500h14M12 119.500h14M12 137.500h14M31.500 56v46M31.500 65.500h5M31.500 83.500h12M31.500 101.500h5" stroke="#777" stroke-dasharray="1 1" fill="none"/></svg>
        <div class="relative flex items-center h-[18px] pl-[3px] gap-[6px]">
          <svg width="16" height="16" viewBox="0 0 16 16"><path d="M1 3l5 4h4l5-4-3 6 1 3-4 1-1 2-2-3-4-1 1-3z" fill="#d4161c"/><path d="M5 5l3-2 3 2v4l-3 2-3-2z" fill="#a01014"/><path d="M1 14l5-3" stroke="#222"/></svg>
          <span>Scene3</span>
        </div>
        <div class="relative flex items-center h-[18px] pl-[7px]">
          <span class="w-[9px] h-[9px] border border-[#8a97a8] bg-[#f4f4f4] flex items-center justify-center text-[#333] text-[10px] leading-none">+</span>
          <svg class="ml-[7px]" width="16" height="16" viewBox="0 0 16 16"><path d="M7 9V1M5 3l2-2 2 2M7 9l7 3M12 9l2 3-3 1M7 9l-6 5" fill="none" stroke="#222" stroke-width="1.300"/></svg>
          <span class="ml-[6px]">Global Coordinate System</span>
        </div>
        <div class="relative flex items-center h-[18px] pl-[7px]">
          <span class="w-[9px] h-[9px] border border-[#8a97a8] bg-[#f4f4f4] flex items-center justify-center text-[#333] text-[10px] leading-none">&minus;</span>
          <svg class="ml-[7px]" width="16" height="16" viewBox="0 0 16 16"><path d="M1 8l5-2V3l4-2 5 2v9l-5 3H1z" fill="#2f7ad4" stroke="#0c2f66"/><path d="M6 6l4 2 5-2M10 8v7M6 3l4 2 5-2" fill="none" stroke="#0c2f66"/></svg>
          <span class="ml-[6px] font-bold">Part5</span>
        </div>
        <div class="relative flex items-center h-[18px] pl-[26px]">
          <span class="w-[9px] h-[9px] border border-[#8a97a8] bg-[#f4f4f4] flex items-center justify-center text-[#333] text-[10px] leading-none">+</span>
          <svg class="ml-[4px]" width="18" height="16" viewBox="0 0 18 16"><path d="M1 3l3-2h8v12l-3 2H1z" fill="#ffe21c" stroke="#111"/><path d="M1 3h8v12M9 3l3-2" fill="none" stroke="#111"/><path d="M15 15V3" stroke="#e01010" stroke-width="1.400"/><path d="M13 5l2-4 2 4z" fill="#e01010"/></svg>
          <span class="ml-[6px]">Extrude1</span>
        </div>
        <div class="relative flex items-center h-[18px] pl-[39px]">
          <svg width="18" height="16" viewBox="0 0 32 28"><path d="M1 27V8Q1 2 8 1.500H30.500L31 20 22 27z" fill="#ffe21c" stroke="#111" stroke-width="1.600"/><path d="M11 8L21 1.500H30.500V10L22 18C22 12 18 9 11 8z" fill="url(#gband)" stroke="#333"/></svg>
          <span class="ml-[6px]">Blend1</span>
        </div>
        <div class="relative flex items-center h-[18px] pl-[26px]">
          <span class="w-[9px] h-[9px] border border-[#8a97a8] bg-[#f4f4f4] flex items-center justify-center text-[#333] text-[10px] leading-none">+</span>
          <svg class="ml-[4px]" width="18" height="16" viewBox="0 0 18 16"><path d="M1 3l3-2h8v12l-3 2H1z" fill="#fff" stroke="#111"/><path d="M1 3h8v12M9 3l3-2" fill="none" stroke="#111"/><path d="M4 1h8L9 3H1z" fill="#ffe21c"/><path d="M15 15V3" stroke="#e01010" stroke-width="1.400"/><path d="M13 5l2-4 2 4z" fill="#e01010"/></svg>
          <span class="ml-[3px] px-[3px] h-[15px] bg-[#3399ff] text-white">Extrude2</span>
        </div>
        <div class="relative flex items-center h-[18px] pl-[7px]">
          <span class="w-[9px] h-[9px] border border-[#8a97a8] bg-[#f4f4f4] flex items-center justify-center text-[#333] text-[10px] leading-none">+</span>
          <svg class="ml-[7px]" width="16" height="16" viewBox="0 0 16 16"><circle cx="4.500" cy="3" r="2.500" fill="#555" stroke="#111"/><circle cx="11" cy="3" r="2.500" fill="#555" stroke="#111"/><rect x="1" y="6" width="11" height="9" fill="#666" stroke="#111"/><rect x="3" y="9" width="6" height="3" fill="#eee"/><path d="M12 8l3-1v6l-3-1z" fill="#333"/></svg>
          <span class="ml-[6px]">Cameras</span>
        </div>
        <div class="relative flex items-center h-[18px] pl-[7px]">
          <span class="w-[9px] h-[9px] border border-[#8a97a8] bg-[#f4f4f4] flex items-center justify-center text-[#333] text-[10px] leading-none">+</span>
          <svg class="ml-[7px]" width="16" height="16" viewBox="0 0 16 16"><path d="M1 3l3-2 6 5-3 3z" fill="#3b6cb4" stroke="#123"/><path d="M7 9l3-3 5 5-2 4-5-1z" fill="#f4e4c0" stroke="#c9b58c"/><path d="M8 12l5-5" stroke="#e01010"/></svg>
          <span class="ml-[6px]">Lights</span>
        </div>
      </div>
      <div class="h-[21px] flex items-center text-[#444]">
        <div class="ml-[1px] w-[57px] h-full bg-white border-x border-b border-[#c8c8c8] flex items-center pl-[3px] gap-[2px]">
          <svg width="15" height="17" viewBox="0 0 19 18"><rect width="19" height="18" fill="#f0e6c8"/><rect x="8" y="1" width="3" height="3" fill="#9ac2ea" stroke="#3b7cc4"/><rect x="5" y="7" width="3" height="3" fill="#9ac2ea" stroke="#3b7cc4"/><rect x="11" y="7" width="3" height="3" fill="#9ac2ea" stroke="#3b7cc4"/><rect x="2" y="14" width="3" height="3" fill="#9ac2ea" stroke="#3b7cc4"/><rect x="8" y="14" width="3" height="3" fill="#9ac2ea" stroke="#3b7cc4"/><rect x="14" y="14" width="3" height="3" fill="#9ac2ea" stroke="#3b7cc4"/></svg>
          <span>Scene</span>
        </div>
        <svg class="ml-[5px]" width="17" height="17" viewBox="0 0 17 17"><circle cx="6.500" cy="6.500" r="5.500" fill="#a8c8ee" stroke="#777" stroke-width="1.400"/><path d="M10.500 10.500l5 5" stroke="#d9951c" stroke-width="3"/></svg>
        <span class="ml-[2px]">Search</span>
        <svg class="ml-[10px]" width="14" height="17" viewBox="0 0 14 17"><rect x=".5" y=".5" width="13" height="16" fill="#f4f4f4" stroke="#333"/><rect x="3" y="3" width="8" height="6" fill="#3f6da8"/><path d="M3 12h8M3 12l2-1.500M3 12l2 1.500" stroke="#222" fill="none"/></svg>
        <span class="ml-[4px]">Properties</span>
      </div>
    </div>

    <!-- 3D viewport -->
    <div class="flex-1 border-l-2 border-l-[#6e6e6e] border-t-2 border-t-[#6f7b88] bg-linear-to-b from-[#56799f] via-[#a5b9d3] via-55% to-[#f9fafb]">
      <svg class="block w-full h-full" viewBox="247 209 1430 744">
        <defs>
          <linearGradient id="blendEdge" gradientUnits="userSpaceOnUse" x1="781" y1="396" x2="791" y2="417"><stop offset="0" stop-color="#cfc2b7"/><stop offset=".35" stop-color="#f2e6dd"/><stop offset=".7" stop-color="#e0d4c9"/><stop offset="1" stop-color="#b9ac9f"/></linearGradient>
          <linearGradient id="cyl" gradientUnits="userSpaceOnUse" x1="1027" y1="0" x2="1250" y2="0"><stop offset="0" stop-color="#8f8278"/><stop offset=".2" stop-color="#94877c"/><stop offset=".38" stop-color="#a89b90"/><stop offset=".56" stop-color="#b8aa9f"/><stop offset=".72" stop-color="#94877c"/><stop offset="1" stop-color="#a0948a"/></linearGradient>
          <linearGradient id="cylLow" gradientUnits="userSpaceOnUse" x1="1024" y1="0" x2="1237" y2="0"><stop offset="0" stop-color="#8f8278"/><stop offset=".25" stop-color="#94877c"/><stop offset=".4" stop-color="#a89b90"/><stop offset=".53" stop-color="#bcaea3"/><stop offset=".72" stop-color="#94877c"/><stop offset="1" stop-color="#a0948a"/></linearGradient>
        </defs>
        <g stroke-linejoin="round" vector-effect="non-scaling-stroke">
          <!-- back box past the body -->
          <path d="M1247 547L1350 600 1342 671 1236 743 1240 712 1234 681 1248 650 1254 571z" fill="#d6d99c" fill-opacity=".72"/>
          <!-- lower cylinder -->
          <path d="M1024 827C1050 842 1075 852 1105 852 1135 854 1185 845 1217 819 1226 808 1232 798 1234 785L1237 743 1124 780 1026 760z" fill="url(#cylLow)" stroke="#1a1a1a" stroke-width="1"/>
          <!-- left side -->
          <path d="M694 438C675 445 662 462 661 488 660 510 670 545 682 571 690 590 702 612 733 636L1024 827 1027 619 731 446 710 438z" fill="#8f8278" stroke="#1a1a1a" stroke-width="1"/>
          <!-- blended edge -->
          <path d="M694 438L868 354C875 352 880 352 887 353L908 360 731 446 710 438z" fill="url(#blendEdge)" stroke="#1a1a1a" stroke-width=".8"/>
          <!-- top face -->
          <path d="M731 446L908 360 1199 505C1215 512 1238 530 1248 547 1256 565 1254 585 1250 591 1245 602 1240 607 1234 612 1222 623 1180 642 1124 642 1090 642 1055 632 1027 619z" fill="#b2a599" stroke="#1a1a1a" stroke-width="1"/>
          <!-- upper cylinder -->
          <path d="M1027 619C1055 632 1090 642 1124 642 1180 642 1222 623 1234 612 1245 602 1250 595 1252 585L1248 650C1245 665 1240 672 1234 681 1220 695 1175 715 1124 715 1090 715 1055 705 1026 690z" fill="url(#cyl)" stroke="#1a1a1a" stroke-width="1"/>
          <!-- notch floor -->
          <path d="M1026 690C1055 705 1090 715 1124 715 1175 715 1220 695 1234 681 1240 695 1241 712 1237 743 1215 765 1175 785 1124 785 1085 785 1055 775 1026 760z" fill="#cdc17c" stroke="#6a6440" stroke-width=".8"/>
          <!-- selected front face -->
          <path d="M832 574L1127 751 1124 822 835 640z" fill="#c6bc80"/>
          <path d="M1124 785C1160 785 1200 775 1237 743L1124 822z" fill="#bdb27b"/>
          <path d="M1026 760L1124 785 1124 822z" fill="#b9ae76"/>
          <path d="M832 574L890 608 835 640z" fill="#c3b976"/>
          <path d="M1026 689V619M1024 827L1026 760" stroke="#1a1a1a" stroke-width="1"/>
          <path d="M1026 760C1055 775 1085 785 1124 785 1175 785 1215 765 1237 743" fill="none" stroke="#555030" stroke-width=".7"/>
          <path d="M832 574L1057 450 1350 600 1342 671 1124 822M1127 751L1350 600M1057 450L1056 515 1342 671M835 640L1056 515" fill="none" stroke="#f4ee6a" stroke-width="1" stroke-dasharray="4 3"/>
          <path d="M832 574L1127 751 1124 822 835 640z" fill="none" stroke="#22e0e0" stroke-width="1"/>
          <!-- handles -->
          <path d="M1199 544l13-2-4 11z" fill="#c0002a" stroke="#300"  stroke-width=".5"/>
          <path d="M1194 554l6-4" stroke="#111"/>
          <path d="M959 696l-5 10h11z" fill="#c0002a"/>
          <path d="M964 700l8-5" stroke="#111"/>
          <path d="M923 705l13-10M930 688l6 6" stroke="#118a8a"/>
          <circle cx="939" cy="695" r="3.500" fill="#0f7a82" stroke="#044"  stroke-width=".5"/>
          <path d="M944 691v-3a3 3 0 016 0v3h-1.500v-3a1.500 1.500 0 00-3 0v3z" fill="#fff" stroke="#222" stroke-width=".5"/>
          <path d="M1124 823l16-11" stroke="#1fc8d0" stroke-width="3"/>
          <path d="M1139 806l-5 2 8 8 4-4 6-8z" fill="#1fc8d0"/>
          <!-- axis triad -->
          <path d="M284 917v-12" stroke="#4444dd" stroke-width="3"/>
          <path d="M280 906l4-7 4 7z" fill="#3a3ae0"/>
          <path d="M280 915l-8-5" stroke="#0c7a10" stroke-width="3"/>
          <path d="M277 906l-7 3 5 3z" fill="#0c9a10"/>
          <path d="M288 915l8-5" stroke="#c04040" stroke-width="3"/>
          <path d="M292 906l7 3-5 3z" fill="#8a1414"/>
          <text x="285" y="896" text-anchor="middle" font-family="Roboto,sans-serif" font-size="9" fill="#2222ee">Z</text>
          <text x="265" y="908" text-anchor="middle" font-family="Roboto,sans-serif" font-size="9" fill="#22dd44">Y</text>
          <text x="304" y="908" text-anchor="middle" font-family="Roboto,sans-serif" font-size="9" fill="#ee2222">X</text>
        </g>
      </svg>
    </div>
  </div>

  <!-- catalog strip -->
  <div class="h-[34px] bg-[#e6e6e6] shrink-0 flex flex-col border-b border-[#cfcfcf]">
    <div class="h-[27px] flex items-center pl-[8px] text-[#444]">
      <svg width="14" height="14" viewBox="0 0 14 14"><rect x=".5" y=".5" width="12" height="13" fill="#f4f4f4" stroke="#555"/><path d="M3 3h2v2H3zM8 3h2v2H8zM3 8h2v2H3zM8 8h2v2H8z" fill="#333"/></svg>
      <span class="ml-[4px]">Catalog Browser</span>
    </div>
    <div class="w-[103px] h-[6px] ml-[7px] bg-[#dcdcdc]"></div>
  </div>

  <!-- status bar -->
  <div class="h-[23px] bg-[#f0f0f0] flex items-center shrink-0 pl-[2px] text-[#444]">
    <span class="w-[913px]">For Help, press F1</span>
    <span class="w-[139px]">View size: 1433 x&nbsp; 746</span>
    <span class="w-[90px]">Units: in, deg</span>
    <div class="flex items-center">
      <svg width="18" height="18" viewBox="0 0 18 18"><circle cx="7" cy="7" r="5.500" fill="#f4f4f4" stroke="#444" stroke-width="1.400"/><circle cx="7" cy="7" r="2.500" fill="none" stroke="#777"/><path d="M11 11l6 6" stroke="#333" stroke-width="2.400"/></svg>
      <svg class="ml-[6px]" width="18" height="18" viewBox="0 0 18 18"><circle cx="7" cy="7" r="5.500" fill="#f4f4f4" stroke="#444" stroke-width="1.400"/><path d="M11 11l6 6" stroke="#333" stroke-width="2.400"/></svg>
      <svg class="ml-[6px]" width="6" height="4" viewBox="0 0 6 4"><path d="M0 0h6L3 4z" fill="#444"/></svg>
      <svg class="ml-[3px]" width="18" height="18" viewBox="0 0 18 18"><path d="M2 6l3-3h8v10l-3 3H2z" fill="#ffe21c" stroke="#111"/><path d="M2 6h8v10M10 6l3-3" fill="none" stroke="#111"/><path d="M15 3v6M12 6h6" stroke="#e01010" stroke-width="1.400"/></svg>
      <svg class="ml-[9px]" width="6" height="4" viewBox="0 0 6 4"><path d="M0 0h6L3 4z" fill="#444"/></svg>
      <svg class="ml-[4px]" width="18" height="18" viewBox="0 0 18 18"><path d="M1 5l5-4h11v12l-5 4H1z" fill="#bcd3ec" stroke="#3d6ea5"/><rect x="1" y="5" width="11" height="12" fill="#2d6ab0"/></svg>
      <svg class="ml-[6px]" width="6" height="4" viewBox="0 0 6 4"><path d="M0 0h6L3 4z" fill="#444"/></svg>
      <svg class="ml-[6px]" width="18" height="18" viewBox="0 0 18 18"><path d="M3 8l6-5 6 5" fill="none" stroke="#3b7cc4" stroke-width="2" stroke-dasharray="2 1"/><rect x="6" y="8" width="9" height="9" fill="#e4e4e4" stroke="#444"/><rect x="8" y="10" width="5" height="3" fill="#3b7cc4"/></svg>
      <svg class="ml-[5px]" width="6" height="4" viewBox="0 0 6 4"><path d="M0 0h6L3 4z" fill="#444"/></svg>
      <span class="ml-[3px] w-[24px] h-[22px] bg-[#c8c8c8] flex items-center justify-center"><svg width="18" height="18" viewBox="0 0 18 18"><path d="M1 8L13 1h4l-3 9-2 7H2z" fill="#5d93d0" stroke="#234" stroke-width=".6"/><path d="M1 8l11 0v9H2z" fill="#2d6ab0"/></svg></span>
      <svg class="ml-[1px]" width="18" height="18" viewBox="0 0 18 18"><circle cx="5" cy="11" r="4" fill="#d9e6f4" stroke="#333" stroke-width="1.300"/><circle cx="13" cy="11" r="3.500" fill="#d9e6f4" stroke="#333" stroke-width="1.300"/><path d="M5 7l2-5h3M13 7l1-3" fill="none" stroke="#333"/></svg>
      <svg class="ml-[2px]" width="6" height="4" viewBox="0 0 6 4"><path d="M0 0h6L3 4z" fill="#444"/></svg>
      <span class="ml-[5px] w-[30px] h-[22px] bg-[#c8c8c8] flex items-center pl-[2px]"><svg width="18" height="18" viewBox="0 0 18 18"><path d="M1 5l4-4h12v12l-4 4H1z" fill="#8fb0dd" stroke="#333" stroke-width=".8"/><path d="M1 5h12v12M13 5l4-4" fill="none" stroke="#333" stroke-width=".8"/></svg><svg class="ml-[2px]" width="6" height="4" viewBox="0 0 6 4"><path d="M0 0h6L3 4z" fill="#444"/></svg></span>
      <svg class="ml-[5px]" width="18" height="18" viewBox="0 0 18 18"><path d="M2 9l5-2V4l4-3 5 2v9l-5 4H2z" fill="#1f6fd4" stroke="#0c2f66"/><path d="M7 7l4 2 5-2M11 9v7M2 9h9" fill="none" stroke="#0c2f66"/></svg>
      <svg class="ml-[1px]" width="6" height="4" viewBox="0 0 6 4"><path d="M0 0h6L3 4z" fill="#777"/></svg>
      <svg class="ml-[7px]" width="18" height="18" viewBox="0 0 18 18"><path d="M1 7l5-4h6l2 3v4h-3v-3H7v4H2z" fill="#aaa"/><path d="M9 7v9l2-2 2 3 1-1-2-3h3z" fill="#eee" stroke="#999" stroke-width=".7"/></svg>
      <span class="ml-[4px] w-[24px] h-[22px] bg-[#c8c8c8] flex items-center justify-center"><svg width="16" height="16"><use href="#arrow-cursor"/></svg></span>
      <svg class="ml-[2px]" width="18" height="18" viewBox="0 0 18 18"><rect x="1.500" y="1.500" width="12" height="9" fill="#f4f4f4" stroke="#999"/><use href="#arrow-cursor" x="6" y="4" width="12" height="13"/></svg>
      <div class="ml-[5px] w-[88px] h-[21px] bg-white border border-[#d0d0d0] flex items-center px-[2px]">Any<svg class="ml-auto mr-[2px]" width="6" height="4" viewBox="0 0 6 4"><path d="M0 0h6L3 4z" fill="#777"/></svg></div>
      <div class="ml-[3px] w-[63px] h-[21px] bg-white border border-[#d0d0d0] flex items-center px-[2px]">Default<svg class="ml-auto mr-[2px]" width="6" height="4" viewBox="0 0 6 4"><path d="M0 0h6L3 4z" fill="#777"/></svg></div>
      <svg class="ml-[3px]" width="18" height="18" viewBox="0 0 18 18"><rect x="6" y="1" width="6" height="5" fill="#e01010"/><path d="M9 6v3M3 12V9h12v3" fill="none" stroke="#2a6ab0"/><rect x="1" y="12" width="6" height="5" fill="#5d93d0" stroke="#2a6ab0"/><rect x="11" y="12" width="6" height="5" fill="#f4d84c" stroke="#2a6ab0"/></svg>
    </div>
  </div>
  <div class="h-[2px] bg-[#2e2e2e] flex-1"><div class="w-[48px] h-full bg-black"></div></div>
</div>
</body>
</html>
